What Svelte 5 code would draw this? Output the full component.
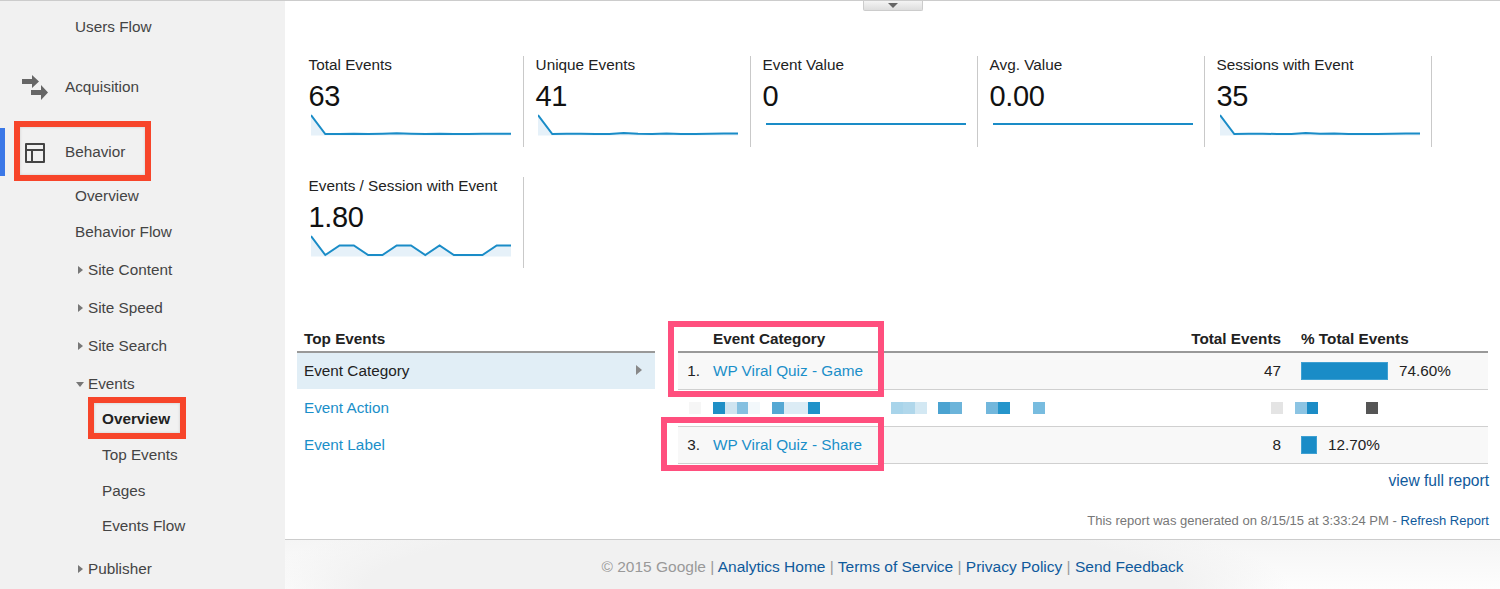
<script lang="ts">
	type Row = { label: string; kind: string; open?: boolean; arrow?: boolean; icon?: string };

	const navRows: Row[] = [
		{ label: 'Users Flow', kind: 'sub first' },
		{ label: 'Acquisition', kind: 'top acq', icon: 'acq' },
		{ label: 'Behavior', kind: 'top beh', icon: 'beh' },
		{ label: 'Overview', kind: 'sub ov' },
		{ label: 'Behavior Flow', kind: 'sub' },
		{ label: 'Site Content', kind: 'sub tree', arrow: true },
		{ label: 'Site Speed', kind: 'sub tree', arrow: true },
		{ label: 'Site Search', kind: 'sub tree', arrow: true },
		{ label: 'Events', kind: 'sub tree', arrow: true, open: true },
		{ label: 'Overview', kind: 'leaf current' },
		{ label: 'Top Events', kind: 'leaf' },
		{ label: 'Pages', kind: 'leaf' },
		{ label: 'Events Flow', kind: 'leaf up' },
		{ label: 'Publisher', kind: 'sub tree pub', arrow: true }
	];

	const cards = [
		{ label: 'Total Events', value: '63', spark: [0, 19, 19, 18.7, 19, 18.7, 18.3, 18.7, 19, 18.7, 19, 19, 18.7, 18.7, 18.7], x: 2 },
		{ label: 'Unique Events', value: '41', spark: [0, 19, 18.7, 18.7, 19, 19, 18, 18.7, 19, 18.5, 19, 19, 18.7, 18.5, 18.5], x: 2 },
		{ label: 'Event Value', value: '0', spark: [9, 9, 9, 9, 9, 9, 9, 9, 9, 9, 9, 9, 9, 9, 9], x: 3 },
		{ label: 'Avg. Value', value: '0.00', spark: [9, 9, 9, 9, 9, 9, 9, 9, 9, 9, 9, 9, 9, 9, 9], x: 3 },
		{ label: 'Sessions with Event', value: '35', spark: [0, 19, 18.7, 18.7, 19, 19, 18, 18.7, 18.5, 18.9, 19, 19, 18.7, 18.5, 18.5], x: 3 },
		{ label: 'Events / Session with Event', value: '1.80', spark: [0, 19, 9.5, 9.5, 19, 19, 9.5, 9.5, 19, 9.5, 19, 19, 19, 9.5, 9.5], x: 2 }
	];

	function linePoints(data: number[]): string {
		return data.map((y, i) => `${(i * 200) / 14},${y + 1}`).join(' ');
	}

	const stripCells: Record<number, string> = {
		0: '#f6f6f6', 2: '#1f8fc6', 3: '#cfe4f0', 4: '#85c0e0', 5: '#f3f8fb',
		7: '#55a8d3', 8: '#dcecf5', 9: '#dcecf5', 10: '#2092c9',
		17: '#a8d4ea', 18: '#b0d7eb', 19: '#d3e8f3',
		21: '#4ba3d1', 22: '#6cb4da', 25: '#72b7dc', 26: '#2595cb', 29: '#78bcdf',
		49: '#e4e4e4', 51: '#8cc4e3', 52: '#1b8cc6', 57: '#555555'
	};
	const strip = Array.from({ length: 58 }, (_, i) => stripCells[i] ?? 'transparent');
</script>

<div class="page">
	<aside class="sidebar">
		<div class="accent"></div>
		{#each navRows as row}
			<div class="nav-row {row.kind}">
				{#if row.icon === 'acq'}
					<svg class="icon" width="26" height="27" viewBox="0 0 26 27">
						<path d="M0 5h10V1l7 6.500-7 6.500V10H0z" fill="#666" />
						<path d="M9 16h10v-5l7 7.500-7 7.500v-5H9z" fill="#666" />
					</svg>
				{:else if row.icon === 'beh'}
					<svg class="icon" width="22" height="22" viewBox="0 0 22 22">
						<path d="M3 2h18v18H3zM3 8h18M9 8v12" fill="none" stroke="#444" stroke-width="2" stroke-linejoin="round" />
					</svg>
				{/if}
				{#if row.arrow}
					<span class="caret" class:open={row.open}></span>
				{/if}
				<span>{row.label}</span>
			</div>
		{/each}
		<div class="mark red-beh"></div>
		<div class="mark red-ov"></div>
	</aside>

	<main class="main">
		<div class="collapse-tab"><span></span></div>

		<section class="cards">
			{#each cards as card}
				<div class="card">
					<div class="card-label">{card.label}</div>
					<div class="card-value">{card.value}</div>
					<svg class="spark" style="margin-left: {card.x}px" width="200" height="22" viewBox="0 0 200 22">
						{#if card.spark[0] === 0}
							<polygon points="0,21.500 {linePoints(card.spark)} 200,21.500" fill="#e6f1f9" />
						{/if}
						<polyline points={linePoints(card.spark)} fill="none" stroke="#1a8cc7" stroke-width="2" />
					</svg>
				</div>
			{/each}
		</section>

		<section class="tables">
			<div class="dims">
				<div class="th">Top Events</div>
				<div class="dim selected">Event Category<span class="dim-arrow"></span></div>
				<div class="dim link">Event Action</div>
				<div class="dim link">Event Label</div>
			</div>
			<div class="report">
				<div class="tr head">
					<span class="idx"></span>
					<span class="cat">Event Category</span>
					<span class="num">Total Events</span>
					<span class="pct">% Total Events</span>
				</div>
				<div class="tr shaded">
					<span class="idx">1.</span>
					<span class="cat link">WP Viral Quiz - Game</span>
					<span class="num">47</span>
					<span class="pct"><i class="bar bar-game"></i>74.60%</span>
				</div>
				<div class="tr pixel-row">
					{#each strip as color}
						<i class="cell" style="background: {color}"></i>
					{/each}
				</div>
				<div class="tr shaded">
					<span class="idx">3.</span>
					<span class="cat link">WP Viral Quiz - Share</span>
					<span class="num">8</span>
					<span class="pct"><i class="bar bar-share"></i>12.70%</span>
				</div>
			</div>
		</section>

		<div class="full-report">view full report</div>
		<div class="generated">This report was generated on 8/15/15 at 3:33:24 PM - <span>Refresh Report</span></div>

		<footer class="footer">
			© 2015 Google | <span>Analytics Home</span> | <span>Terms of Service</span> | <span>Privacy Policy</span> | <span>Send Feedback</span>
		</footer>

		<div class="mark pink-top"></div>
		<div class="mark pink-bottom"></div>
	</main>
</div>

<style>
	:global(body) {
		margin: 0;
		background: #fff;
	}

	.page {
		display: flex;
		width: 1500px;
		height: 589px;
		overflow: hidden;
		font-family: 'Liberation Sans', Arial, sans-serif;
		font-size: 15.3px;
		color: #222;
		border-top: 1px solid #ccc;
		box-sizing: border-box;
	}

	.sidebar {
		position: relative;
		width: 285px;
		flex: none;
		background: #f1f1f1;
		color: #444;
	}

	.accent {
		position: absolute;
		left: 0;
		top: 127px;
		width: 5px;
		height: 48px;
		background: #3b78e7;
	}

	.nav-row {
		display: flex;
		align-items: center;
		height: 36px;
		margin-top: 2px;
	}

	.first {
		margin-top: 8px;
	}

	.top {
		padding-left: 65px;
		position: relative;
	}

	.acq {
		margin-top: 24px;
	}

	.beh {
		margin-top: 29px;
	}

	.sub {
		padding-left: 75px;
	}

	.ov {
		margin-top: 8px;
	}

	.ov + .sub {
		margin-top: 0;
	}

	.tree {
		padding-left: 76px;
	}

	.pub {
		margin-top: 7px;
	}

	.leaf {
		padding-left: 102px;
		margin-top: 0;
	}

	.current {
		margin-top: -1px;
		font-weight: 700;
		color: #222;
	}

	.up {
		margin-top: -1px;
	}

	.icon {
		position: absolute;
		left: 22px;
		top: 5px;
	}

	.beh .icon {
		left: 23px;
		top: 8px;
	}

	.caret {
		width: 0;
		height: 0;
		margin: 0 5px 0 2px;
		border-style: solid;
		border-width: 4.500px 0 4.500px 5px;
		border-color: transparent transparent transparent #777;
	}

	.caret.open {
		margin: 0 4px 0 0;
		border-width: 5px 4.500px 0 4.500px;
		border-color: #777 transparent transparent transparent;
	}

	.mark {
		position: absolute;
		box-sizing: border-box;
		pointer-events: none;
	}

	.red-beh {
		left: 14px;
		top: 120px;
		width: 137px;
		height: 60px;
		border: 6px solid #f7452a;
		box-shadow: inset 0 0 3px rgba(0, 0, 0, 0.15);
	}

	.red-ov {
		left: 88px;
		top: 396px;
		width: 98px;
		height: 42px;
		border: 6px solid #f7452a;
		box-shadow: inset 0 0 3px rgba(0, 0, 0, 0.15);
	}

	.main {
		position: relative;
		flex: 1;
		display: flex;
		flex-direction: column;
		min-width: 0;
	}

	.collapse-tab {
		position: absolute;
		left: 578px;
		top: 0;
		width: 60px;
		height: 10px;
		display: flex;
		justify-content: center;
		background: linear-gradient(#f4f4f4, #dedede);
		border: 1px solid #ccc;
		border-top: 0;
		border-radius: 0 0 2px 2px;
		box-sizing: border-box;
	}

	.collapse-tab span {
		width: 0;
		height: 0;
		margin-top: 2px;
		border-style: solid;
		border-width: 5px 5px 0 5px;
		border-color: #666 transparent transparent transparent;
	}

	.cards {
		display: grid;
		grid-template-columns: repeat(5, 227px);
		row-gap: 30px;
		padding: 55px 0 0 12px;
	}

	.card {
		height: 91px;
		padding-left: 11.600px;
		border-right: 1px solid #c9c9c9;
		box-sizing: border-box;
	}

	.card-label {
		line-height: 18px;
		color: #222;
	}

	.card-value {
		margin-top: 6px;
		font-size: 29px;
		letter-spacing: -0.4px;
		line-height: 32px;
		color: #111;
	}

	.spark {
		display: block;
		margin-top: 2px;
	}

	.tables {
		display: flex;
		gap: 23px;
		margin: 59px 0 0 12px;
		line-height: 18px;
	}

	.dims {
		width: 358px;
		flex: none;
	}

	.th {
		height: 21px;
		padding: 3px 0 0 7px;
		font-weight: 700;
		border-bottom: 2px solid #999;
		color: #222;
	}

	.dim {
		position: relative;
		display: flex;
		align-items: center;
		height: 35px;
		padding: 0 0 2px 7px;
	}

	.selected {
		height: 36px;
		padding-bottom: 0;
		margin-bottom: 1px;
		background: #e1eef6;
		color: #222;
	}

	.dim-arrow {
		position: absolute;
		right: 13px;
		top: 12px;
		width: 0;
		height: 0;
		border-style: solid;
		border-width: 5px 0 5px 6px;
		border-color: transparent transparent transparent #888;
	}

	.link {
		color: #1b8fc9;
	}

	.report {
		width: 810px;
		flex: none;
	}

	.tr {
		display: flex;
		align-items: center;
		height: 37px;
		border-bottom: 1.500px solid #d0d0d0;
		box-sizing: border-box;
	}

	.head {
		height: 26px;
		padding-top: 3px;
		align-items: flex-start;
		font-weight: 700;
		border-bottom: 2px solid #999;
	}

	.shaded {
		background: #f8f8f8;
	}

	.idx {
		width: 22px;
		margin-right: 13px;
		text-align: right;
		flex: none;
	}

	.cat {
		flex: 1;
	}

	.num {
		width: 120px;
		margin-right: 20px;
		text-align: right;
		flex: none;
	}

	.pct {
		width: 187px;
		display: flex;
		align-items: center;
		flex: none;
	}

	.bar {
		height: 18px;
		margin-right: 11px;
		background: #1a8cc7;
		box-shadow: inset 0 0 0 1px #3fa0d2;
	}

	.bar-game {
		width: 87px;
	}

	.bar-share {
		width: 16px;
	}

	.pixel-row {
		display: grid;
		grid-template-columns: repeat(58, 11.880px);
		padding-left: 11px;
	}

	.cell {
		display: block;
		height: 12px;
	}

	.full-report {
		margin: 8px 11px 0 0;
		text-align: right;
		font-size: 15.600px;
		line-height: 18px;
		color: #0f5a9c;
	}

	.generated {
		margin: 23px 11px 0 0;
		text-align: right;
		font-size: 13.050px;
		line-height: 16px;
		color: #777;
	}

	.generated span {
		color: #0f5a9c;
	}

	.footer {
		flex: 1;
		margin-top: 10px;
		padding-top: 18px;
		text-align: center;
		font-size: 15.500px;
		line-height: 18px;
		color: #999;
		border-top: 1.500px solid #ccc;
		background:
			radial-gradient(ellipse 520px 90px at 485px 100%, #f1f1f1 78%, rgba(241, 241, 241, 0) 100%),
			linear-gradient(#f5f5f5, #fdfdfd);
	}

	.footer span {
		color: #0f5a9c;
	}

	.pink-top {
		left: 383px;
		top: 320px;
		width: 216px;
		height: 76px;
		border: 6px solid #ff4f7e;
	}

	.pink-bottom {
		left: 376px;
		top: 416px;
		width: 223px;
		height: 54px;
		border: 6px solid #ff4f7e;
	}
</style>
